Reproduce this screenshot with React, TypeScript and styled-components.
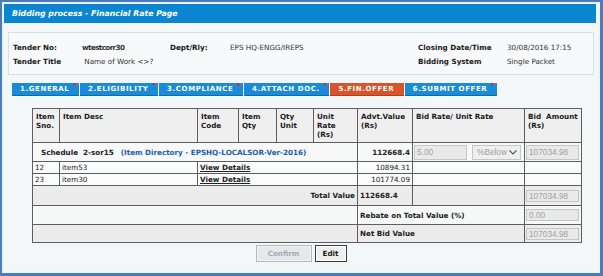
import { createGlobalStyle } from 'styled-components';
import styled from 'styled-components';

const GlobalStyle = createGlobalStyle`
  html, body {
    margin: 0;
    padding: 0;
    background: #ffffff;
  }
  body {
    font-family: "DejaVu Sans", Verdana, sans-serif;
  }
`;

const Frame = styled.div`
  box-sizing: border-box;
  width: 603px;
  height: 276px;
  border: 2px solid #4a7bbd;
  border-right-width: 3px;
  border-bottom-width: 3px;
  padding: 2px;
  background: #eef3f7;
`;

const Panel = styled.div`
  height: 100%;
  background: #f4f7f8;
  display: flex;
  flex-direction: column;
`;

const TitleBar = styled.div`
  height: 19px;
  margin-right: 2px;
  background: #0a85cf;
  color: #ffffff;
  font-size: 7.8px;
  font-weight: bold;
  font-style: italic;
  display: flex;
  align-items: center;
  padding-left: 8px;
`;

const Body = styled.div`
  padding: 9px 4px 0 4px;
  display: flex;
  flex-direction: column;
`;

const InfoBox = styled.div`
  border: 1px solid #d4e2eb;
  background: #f7f9fa;
  padding: 7px 0 6px 4px;
  display: grid;
  grid-template-columns: 69px 88px 60px 188px 89px 1fr;
  grid-auto-rows: 14px;
  align-items: center;
  font-size: 7.2px;
  color: #222;
`;

const Label = styled.span`
  font-weight: bold;
  color: #1a1a1a;
`;

const Value = styled.span<{ $strong?: boolean }>`
  font-weight: ${(p) => (p.$strong ? 'bold' : 'normal')};
  letter-spacing: ${(p) => (p.$strong ? '-0.6px' : '0')};
  color: #333;
`;

const TabRow = styled.div`
  display: flex;
  gap: 1px;
  margin: 8px 0 0 4px;
`;

const Tab = styled.div<{ $active?: boolean }>`
  height: 12px;
  display: flex;
  align-items: center;
  padding: 0 2px 0 8px;
  background: ${(p) => (p.$active ? '#d9542b' : '#1a8bd6')};
  border-bottom: 1px solid ${(p) => (p.$active ? '#b0401c' : '#0c6cae')};
  color: #ffffff;
  font-size: 7px;
  font-weight: bold;
  letter-spacing: 0.6px;
`;

const Star = styled.span<{ $hidden?: boolean }>`
  align-self: flex-start;
  margin: -1px 0 0 4px;
  color: #e8262b;
  font-size: 7px;
  line-height: 8px;
  letter-spacing: 0;
  visibility: ${(p) => (p.$hidden ? 'hidden' : 'visible')};
`;

const Grid = styled.table`
  margin: 12px 0 0 24px;
  width: 549px;
  table-layout: fixed;
  border-collapse: collapse;
  border: 1px solid #555;
  font-size: 7.2px;
  color: #222;
`;

const Row = styled.tr<{ $h: number; $bg: string }>`
  height: ${(p) => p.$h}px;
  background: ${(p) => p.$bg};
`;

const Head = styled.th`
  border: 1px solid #5e5e5e;
  text-align: left;
  vertical-align: top;
  padding: 3px 3px 0;
  line-height: 9px;
  font-weight: bold;
  color: #222;
`;

const Cell = styled.td<{ $align?: string; $bold?: boolean; $pad?: number }>`
  border: 1px solid #5e5e5e;
  padding: 0 ${(p) => p.$pad ?? 2}px 0 ${(p) => p.$pad ?? 2}px;
  text-align: ${(p) => p.$align ?? 'left'};
  font-weight: ${(p) => (p.$bold ? 'bold' : 'normal')};
  vertical-align: middle;
  white-space: nowrap;
  overflow: hidden;
`;

const DirLink = styled.span`
  color: #1d5ea8;
  margin-left: 7px;
`;

const Details = styled.span`
  font-weight: bold;
  text-decoration: underline;
  color: #222;
`;

const Field = styled.div<{ $w: number; $h: number }>`
  box-sizing: border-box;
  width: ${(p) => p.$w}px;
  height: ${(p) => p.$h}px;
  border: 1px solid #c6c6c6;
  background: #e9e9e9;
  color: #a2a2a2;
  font-family: "Liberation Sans", Arial, sans-serif;
  font-size: 8.3px;
  display: flex;
  align-items: center;
  padding-left: 2px;
`;

const RateBox = styled.div`
  display: flex;
  gap: 5px;
  align-items: center;
`;

const Dropdown = styled(Field)`
  background: #efefef;
  justify-content: space-between;
  padding: 0 3px 0 4px;
  color: #9c9c9c;
`;

const Buttons = styled.div`
  display: flex;
  justify-content: center;
  gap: 3px;
  margin-top: 2px;
`;

const Button = styled.button<{ $disabled?: boolean }>`
  box-sizing: border-box;
  height: 17px;
  padding: 0;
  font-family: "DejaVu Sans", Verdana, sans-serif;
  font-size: 7.2px;
  font-weight: bold;
  background: ${(p) => (p.$disabled ? '#e2e8eb' : '#eef0f0')};
  color: ${(p) => (p.$disabled ? '#a2acb1' : '#1a1a1a')};
  border: 1px solid ${(p) => (p.$disabled ? '#aebac0' : '#3a3a3a')};
  box-shadow: inset 0 0 0 1px ${(p) => (p.$disabled ? '#f2f5f6' : '#ffffff')};
`;

const Chevron = () => (
  <svg width="8" height="5" viewBox="0 0 8 5">
    <polyline points="0.5,0.5 4,4 7.5,0.5" fill="none" stroke="#555" strokeWidth="1.1" />
  </svg>
);

const tabs = [
  { label: '1.GENERAL', star: true },
  { label: '2.ELIGIBILITY', star: true },
  { label: '3.COMPLIANCE', star: true },
  { label: '4.ATTACH DOC.', star: true },
  { label: '5.FIN.OFFER', star: false, active: true },
  { label: '6.SUBMIT OFFER', star: true },
];

const items = [
  { sno: '12', desc: 'item53', value: '10894.31' },
  { sno: '23', desc: 'item30', value: '101774.09' },
];

const cols = [27, 138, 41, 38, 37, 44, 55, 112, 57];

const App = () => {
  return (
    <>
      <GlobalStyle />
      <Frame>
        <Panel>
          <TitleBar>Bidding process - Financial Rate Page</TitleBar>
          <Body>
            <InfoBox>
              <Label>Tender No:</Label>
              <Value $strong>wtestcorr30</Value>
              <Label>Dept/Rly:</Label>
              <Value>EPS HQ-ENGG/IREPS</Value>
              <Label>Closing Date/Time</Label>
              <Value>30/08/2016 17:15</Value>
              <Label>Tender Title</Label>
              <Value>&nbsp;Name of Work &lt;&gt;?</Value>
              <span />
              <span />
              <Label>Bidding System</Label>
              <Value>Single Packet</Value>
            </InfoBox>

            <TabRow>
              {tabs.map((t) => (
                <Tab key={t.label} $active={t.active}>
                  {t.label}
                  <Star $hidden={!t.star}>*</Star>
                </Tab>
              ))}
            </TabRow>

            <Grid>
              <colgroup>
                {cols.map((w, i) => (
                  <col key={i} style={{ width: w }} />
                ))}
              </colgroup>
              <tbody>
                <Row $h={34} $bg="#efefef">
                  <Head>Item<br />Sno.</Head>
                  <Head>Item Desc</Head>
                  <Head>Item<br />Code</Head>
                  <Head>Item<br />Qty</Head>
                  <Head>Qty<br />Unit</Head>
                  <Head>Unit<br />Rate<br />(Rs)</Head>
                  <Head>Advt.Value<br />(Rs)</Head>
                  <Head>Bid Rate/ Unit Rate</Head>
                  <Head>Bid&nbsp; Amount<br />(Rs)</Head>
                </Row>
                <Row $h={19} $bg="#f7f8f8">
                  <Cell colSpan={6} $bold $pad={8}>
                    Schedule&nbsp; 2-sor15<DirLink>(Item Directory - EPSHQ-LOCALSOR-Ver-2016)</DirLink>
                  </Cell>
                  <Cell $align="right" $bold>112668.4</Cell>
                  <Cell $pad={1}>
                    <RateBox>
                      <Field $w={53} $h={15}>5.00</Field>
                      <Dropdown $w={49} $h={15}>
                        %Below
                        <Chevron />
                      </Dropdown>
                    </RateBox>
                  </Cell>
                  <Cell $pad={1}>
                    <Field $w={53} $h={15}>107034.98</Field>
                  </Cell>
                </Row>
                {items.map((it) => (
                  <Row key={it.sno} $h={12} $bg="#fafbfb">
                    <Cell>{it.sno}</Cell>
                    <Cell>{it.desc}</Cell>
                    <Cell colSpan={4}>
                      <Details>View Details</Details>
                    </Cell>
                    <Cell $align="right">{it.value}</Cell>
                    <Cell />
                    <Cell />
                  </Row>
                ))}
                <Row $h={20} $bg="#ececec">
                  <Cell colSpan={6} $align="right" $bold>Total Value</Cell>
                  <Cell $bold>112668.4</Cell>
                  <Cell />
                  <Cell $pad={1}>
                    <Field $w={53} $h={12}>107034.98</Field>
                  </Cell>
                </Row>
                <Row $h={19} $bg="#f6f8f8">
                  <Cell colSpan={6} />
                  <Cell colSpan={2} $bold>Rebate on Total Value (%)</Cell>
                  <Cell $pad={1}>
                    <Field $w={53} $h={12}>0.00</Field>
                  </Cell>
                </Row>
                <Row $h={18} $bg="#ececec">
                  <Cell colSpan={6} />
                  <Cell colSpan={2} $bold>Net Bid Value</Cell>
                  <Cell $pad={1}>
                    <Field $w={53} $h={12}>107034.98</Field>
                  </Cell>
                </Row>
              </tbody>
            </Grid>

            <Buttons>
              <Button $disabled style={{ width: 56 }}>Confirm</Button>
              <Button style={{ width: 32 }}>Edit</Button>
            </Buttons>
          </Body>
        </Panel>
      </Frame>
    </>
  );
};

export default App;
